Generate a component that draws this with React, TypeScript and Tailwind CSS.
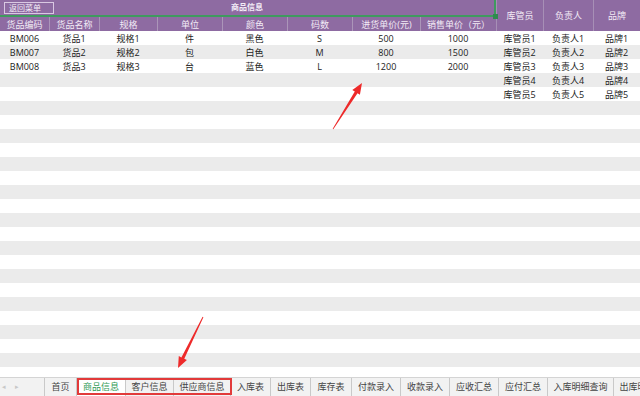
import React from 'react';

const cols = [49, 50, 58, 65, 65, 65, 68, 76, 47, 50, 47];
const gridCols = 'grid-cols-[49px_50px_58px_65px_65px_65px_68px_76px_47px_50px_47px]';

const subHeads = ['货品编码', '货品名称', '规格', '单位', '颜色', '码数', '进货单价(元)', '销售单价（元）'];

const rows: string[][] = [
  ['BM006', '货品1', '规格1', '件', '黑色', 'S', '500', '1000', '库管员1', '负责人1', '品牌1'],
  ['BM007', '货品2', '规格2', '包', '白色', 'M', '800', '1500', '库管员2', '负责人2', '品牌2'],
  ['BM008', '货品3', '规格3', '台', '蓝色', 'L', '1200', '2000', '库管员3', '负责人3', '品牌3'],
  ['', '', '', '', '', '', '', '', '库管员4', '负责人4', '品牌4'],
  ['', '', '', '', '', '', '', '', '库管员5', '负责人5', '品牌5'],
];

const tabs = [
  { name: '首页', w: 'w-[32px]' },
  { name: '商品信息', w: 'w-[49px]', active: true },
  { name: '客户信息', w: 'w-[48px]' },
  { name: '供应商信息', w: 'w-[57px]' },
  { name: '入库表', w: 'w-[40px]' },
  { name: '出库表', w: 'w-[40px]' },
  { name: '库存表', w: 'w-[41px]' },
  { name: '付款录入', w: 'w-[49px]' },
  { name: '收款录入', w: 'w-[49px]' },
  { name: '应收汇总', w: 'w-[49px]' },
  { name: '应付汇总', w: 'w-[49px]' },
  { name: '入库明细查询', w: 'w-[66px]' },
  { name: '出库明细查询', w: 'w-[66px]' },
];

// 红色箭头：从尾部细线渐宽到箭头
const arrowPoints = (x1: number, y1: number, x2: number, y2: number) => {
  const dx = x2 - x1;
  const dy = y2 - y1;
  const len = Math.hypot(dx, dy);
  const ux = dx / len;
  const uy = dy / len;
  const px = -uy;
  const py = ux;
  const headLen = 11;
  const bx = x2 - ux * headLen;
  const by = y2 - uy * headLen;
  const p = (x: number, y: number) => `${x.toFixed(1)},${y.toFixed(1)}`;
  return [
    p(x1 + px * 0.4, y1 + py * 0.4),
    p(bx + px * 1.6, by + py * 1.6),
    p(bx + px * 4.5, by + py * 4.5),
    p(x2, y2),
    p(bx - px * 4.5, by - py * 4.5),
    p(bx - px * 1.6, by - py * 1.6),
    p(x1 - px * 0.4, y1 - py * 0.4),
  ].join(' ');
};

const bodyRows = Array.from({ length: 25 }, (_, i) => i);

const App: React.FC = () => {
  return (
    <div
      className="relative w-[640px] h-[396px] overflow-hidden bg-white text-[9px] text-[#222]"
      style={{ fontFamily: '"Open Sans", "Noto Sans CJK SC", sans-serif' }}
    >
      {/* 表头 */}
      <div className={`grid ${gridCols} grid-rows-[17px_14px] bg-[#8e6ba2] text-[#f3ecf6]`}>
        <div className="col-span-8 relative flex items-center justify-center border-b-2 border-r-2 border-[#3f9a5f]">
          <div className="absolute left-[4px] top-[2px] h-[12px] w-[50px] border border-[#d9c8e2] flex items-center pl-[4px] text-[8px] leading-none">
            返回菜单
          </div>
          <span className="font-bold text-[8px] -mt-[2px]">商品信息</span>
          <div className="absolute right-[-4px] bottom-[-4px] w-[5px] h-[5px] bg-[#2f8a4f]" />
        </div>
        {['库管员', '负责人', '品牌'].map((h) => (
          <div key={h} className="row-span-2 flex items-center justify-center border-l border-[#a78fb6]">
            {h}
          </div>
        ))}
        {subHeads.map((h, i) => (
          <div
            key={h}
            className={`flex items-center justify-center leading-none ${i > 0 ? 'border-l border-[#ab95b9]' : ''}`}
          >
            {h}
          </div>
        ))}
      </div>

      {/* 数据区 */}
      <div className="h-[346px] overflow-hidden">
        {bodyRows.map((r) => (
          <div
            key={r}
            className={`grid ${gridCols} h-[14px] ${r % 2 === 1 ? 'bg-[#ebebeb]' : 'bg-white'}`}
          >
            {cols.map((_, c) => (
              <div key={c} className="flex items-center justify-center leading-none">
                {rows[r]?.[c] ?? ''}
              </div>
            ))}
          </div>
        ))}
      </div>

      {/* 工作表标签 */}
      <div className="relative flex h-[19px] bg-[#f2f2f2] border-t border-[#d4d4d4] text-[9px] text-[#444] overflow-hidden">
        <div className="w-[45px] shrink-0 flex items-center gap-[9px] pl-[2px] text-[#c8c8c8] text-[7px] border-r border-[#c9c9c9]">
          <span>◂</span>
          <span>▸</span>
        </div>
        {tabs.map((t) => (
          <div
            key={t.name}
            className={`${t.w} shrink-0 flex items-center justify-center whitespace-nowrap border-r border-[#c9c9c9] ${
              t.active ? 'bg-white text-[#2f9a55]' : ''
            }`}
          >
            {t.name}
          </div>
        ))}
        <div className="absolute left-[77px] top-0 w-[155px] h-[17px] border-2 border-[#e23a3a]" />
      </div>

      {/* 标注箭头 */}
      <svg className="absolute inset-0 pointer-events-none" width="640" height="396">
        <polygon points={arrowPoints(333, 129, 362, 83)} fill="#ee2a2a" />
        <polygon points={arrowPoints(203, 317, 178, 368)} fill="#ee2a2a" />
      </svg>
    </div>
  );
};

export default App;
